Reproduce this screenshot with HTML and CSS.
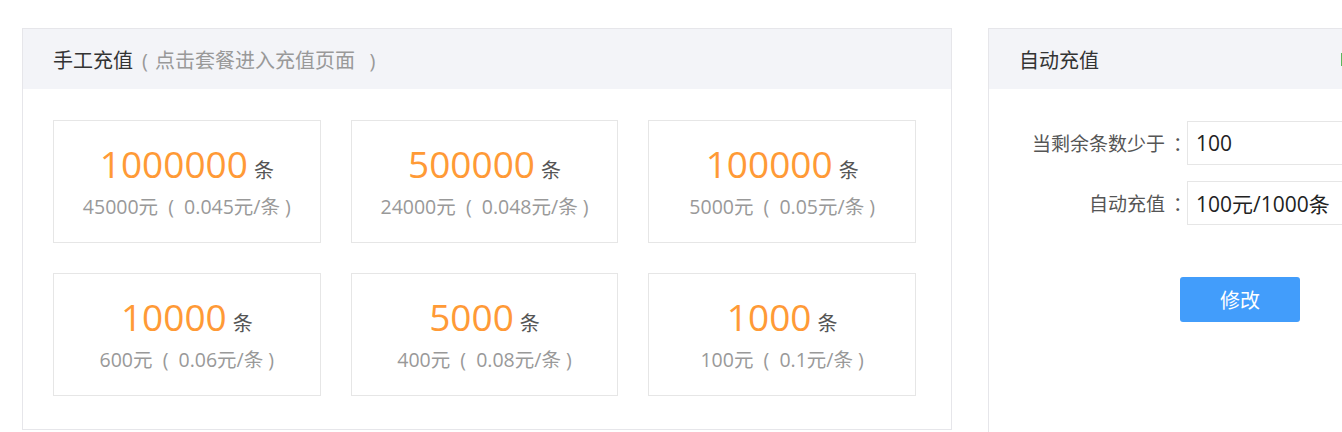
FILE: index.html
```html
<!DOCTYPE html>
<html lang="zh-CN">
<head>
<meta charset="UTF-8">
<meta name="viewport" content="width=device-width, initial-scale=1.0">
<title>充值</title>
<link rel="stylesheet" href="styles.css">
</head>
<body>

<div class="page">
    <div class="panel manual">
        <div class="panel-head">
            手工充值<span class="hint">( 点击套餐进入充值页面  )</span>
        </div>
        <div class="panel-body">
            <div class="packs">
                <a class="pack" href="#">
                    <div class="count">1000000<span class="unit">条</span></div>
                    <div class="price">45000元  (  0.045元/条 )</div>
                </a>
                <a class="pack" href="#">
                    <div class="count">500000<span class="unit">条</span></div>
                    <div class="price">24000元  (  0.048元/条 )</div>
                </a>
                <a class="pack" href="#">
                    <div class="count">100000<span class="unit">条</span></div>
                    <div class="price">5000元  (  0.05元/条 )</div>
                </a>
                <a class="pack" href="#">
                    <div class="count">10000<span class="unit">条</span></div>
                    <div class="price">600元  (  0.06元/条 )</div>
                </a>
                <a class="pack" href="#">
                    <div class="count">5000<span class="unit">条</span></div>
                    <div class="price">400元  (  0.08元/条 )</div>
                </a>
                <a class="pack" href="#">
                    <div class="count">1000<span class="unit">条</span></div>
                    <div class="price">100元  (  0.1元/条 )</div>
                </a>
            </div>
        </div>
    </div>

    <div class="panel auto">
        <div class="panel-head">
            自动充值
            <span class="status"></span>
        </div>
        <div class="panel-body">
            <form class="auto-form">
                <div class="row">
                    <label for="minCount">当剩余条数少于<span class="colon">：</span></label>
                    <input type="text" id="minCount" value="100">
                </div>
                <div class="row">
                    <label for="plan">自动充值<span class="colon">：</span></label>
                    <input type="text" id="plan" value="100元/1000条">
                </div>
                <button type="button" class="save-btn">修改</button>
            </form>
        </div>
    </div>
</div>

</body>
</html>
```

FILE: styles.css
```css
html, body {
    overflow: hidden;
}
body {
    margin: 0;
    background-color: #fff;
    font-family: "Open Sans", "Noto Sans CJK SC", sans-serif;
    color: #333;
}
.page {
    display: flex;
    align-items: flex-start;
    gap: 36px;
    padding: 28px 0 0 22px;
    width: max-content;
}
.panel {
    border: 1px solid #e6e6ea;
    background-color: #fff;
}
.manual {
    width: 928px;
}
.auto {
    width: 421px;
    height: 420px;
}
.panel-head {
    display: flex;
    align-items: center;
    height: 60px;
    padding: 0 30px;
    background-color: #f3f4f8;
    font-size: 20px;
    color: #333;
}
.hint {
    margin-left: 9px;
    color: #999;
    white-space: pre;
    word-spacing: 2px;
}
.status {
    width: 39px;
    height: 13px;
    margin-left: auto;
    background-color: #5cb85c;
}
.panel-body {
    padding: 31px 35px 33px 30px;
}
.packs {
    display: grid;
    grid-template-columns: repeat(3, 1fr);
    gap: 30px;
}
.pack {
    display: flex;
    flex-direction: column;
    align-items: center;
    justify-content: center;
    height: 121px;
    border: 1px solid #e6e6e6;
    text-decoration: none;
}
.count {
    font-size: 37px;
    line-height: 44px;
    color: #ff9a36;
}
.unit {
    margin-left: 6px;
    font-size: 20px;
    color: #555;
}
.price {
    font-size: 19.5px;
    line-height: 28px;
    color: #999;
    white-space: pre;
}
.auto .panel-body {
    padding: 32px 0 0;
}
.row {
    display: flex;
    align-items: center;
    margin-bottom: 16px;
}
.row label {
    flex: none;
    width: 198px;
    text-align: right;
    font-size: 19px;
    color: #555;
}
.colon {
    margin: 0 -5px 0 8px;
}
.row input {
    width: 220px;
    height: 44px;
    box-sizing: border-box;
    padding: 0 8px;
    border: 1px solid #e6e6e6;
    font-family: "Open Sans", "Noto Sans CJK SC", sans-serif;
    font-size: 21px;
    color: #222;
    outline: none;
}
.save-btn {
    margin: 36px 0 0 191px;
    width: 120px;
    height: 45px;
    border: none;
    border-radius: 3px;
    background-color: #429dfb;
    color: #fff;
    font-family: "Open Sans", "Noto Sans CJK SC", sans-serif;
    font-size: 20px;
    cursor: pointer;
}
```
